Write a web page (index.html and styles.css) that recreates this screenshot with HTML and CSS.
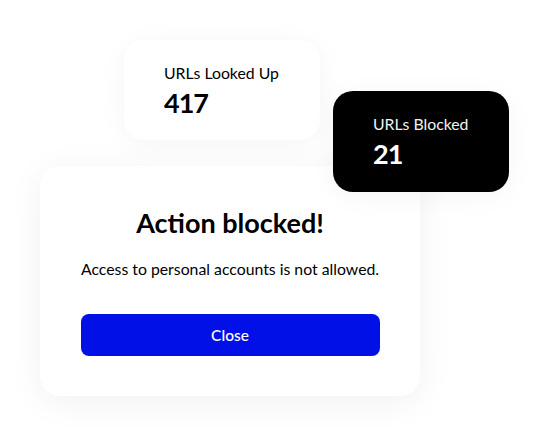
FILE: index.html
```html
<!DOCTYPE html>
<html>
<head>
<meta charset="utf-8">
<link rel="stylesheet" href="styles.css">
</head>
<body>
<div class="stage">
  <div class="card stat stat-looked">
    <div class="stat-label">URLs Looked Up</div>
    <div class="stat-value">417</div>
  </div>
  <div class="card dialog">
    <h1 class="dialog-title">Action blocked!</h1>
    <p class="dialog-text">Access to personal accounts is not allowed.</p>
    <button class="dialog-button">Close</button>
  </div>
  <div class="card stat stat-blocked">
    <div class="stat-label">URLs Blocked</div>
    <div class="stat-value">21</div>
  </div>
</div>
</body>
</html>
```
FILE: styles.css
```css
html, body {
  margin: 0;
  padding: 0;
  background: #ffffff;
}
.stage {
  position: relative;
  width: 549px;
  height: 437px;
  overflow: hidden;
  font-family: "Lato", "Inter", sans-serif;
  color: #000;
}
.card {
  position: absolute;
  box-sizing: border-box;
  border-radius: 20px;
  background: #fff;
  box-shadow: 0 4px 28px rgba(0, 0, 0, 0.045);
}
.stat {
  display: flex;
  flex-direction: column;
  justify-content: center;
  gap: 6px;
}
.stat-looked {
  left: 124px;
  top: 40px;
  width: 196px;
  height: 100px;
  padding-left: 40px;
}
.stat-blocked {
  left: 333px;
  top: 91px;
  width: 176px;
  height: 101px;
  padding-left: 40px;
  background: #000;
  color: #fff;
}
.stat-label {
  font-size: 15.8px;
  line-height: 19px;
  white-space: nowrap;
}
.stat-blocked .stat-label {
  color: #f2f2f2;
}
.stat-value {
  font-size: 27px;
  font-weight: 700;
  line-height: 30px;
  letter-spacing: -1px;
}
.dialog {
  left: 40px;
  top: 166px;
  width: 380px;
  height: 230px;
  padding: 40px 30px 0;
  display: flex;
  flex-direction: column;
  align-items: center;
  box-shadow: 0 6px 36px rgba(0, 0, 0, 0.06);
}
.dialog-title {
  margin: 0;
  font-size: 27px;
  font-weight: 700;
  line-height: 34px;
  white-space: nowrap;
}
.dialog-text {
  margin: 19px 0 0;
  font-size: 15.8px;
  line-height: 20px;
  white-space: nowrap;
}
.dialog-button {
  margin-top: 35px;
  width: 299px;
  height: 42px;
  border: 0;
  border-radius: 8px;
  background: #0010e6;
  color: #fff;
  font-family: inherit;
  font-size: 15.5px;
  font-weight: 500;
}
```
